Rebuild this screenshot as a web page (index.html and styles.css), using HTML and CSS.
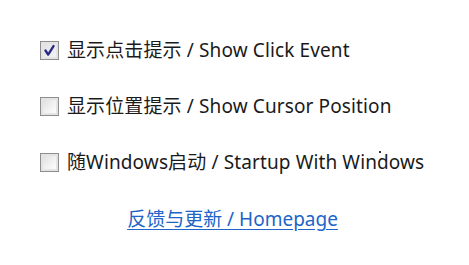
FILE: index.html
```html
<!DOCTYPE html>
<html>
<head>
<meta charset="utf-8">
<link rel="stylesheet" href="styles.css">
</head>
<body>
<div class="panel">
  <label class="row">
    <span class="box checked">
      <svg viewBox="0 0 19 19" width="19" height="19"><path d="M5 9.5 L8 14 L14 4.5" fill="none" stroke="#27288a" stroke-width="2.6" stroke-linecap="round" stroke-linejoin="round"/></svg>
    </span>
    <span class="text">显示点击提示 / Show Click Event</span>
  </label>
  <label class="row">
    <span class="box"></span>
    <span class="text">显示位置提示 / Show Cursor Position</span>
  </label>
  <label class="row">
    <span class="box"></span>
    <span class="text">随Windows启动 / Startup With Windows</span>
  </label>
  <div class="linkrow"><a class="link" href="#">反馈与更新 / Homepage</a></div>
</div>
<span class="dot"></span>
</body>
</html>
```
FILE: styles.css
```css
html, body {
  margin: 0;
  padding: 0;
  background: #ffffff;
  width: 469px;
  height: 265px;
  overflow: hidden;
  position: relative;
}
.panel {
  display: flex;
  flex-direction: column;
  padding: 22px 0 0 40px;
  font-family: "Noto Sans", "Noto Sans CJK SC", sans-serif;
  font-size: 19px;
  color: #1a1a1a;
}
.row {
  display: flex;
  align-items: center;
  gap: 8px;
  height: 56px;
}
.box {
  box-sizing: border-box;
  width: 19px;
  height: 19px;
  border: 1px solid #8e8e8e;
  background: linear-gradient(135deg, #dcdcdc 0%, #f3f3f3 60%, #ffffff 100%);
  box-shadow: inset 0 0 0 2px #e4e4e4;
  display: flex;
  align-items: center;
  justify-content: center;
}
.box svg { display: block; }
.box.checked {
  background: linear-gradient(135deg, #e0e0e0 0%, #f5f5f5 100%);
}
.text { line-height: 24px; letter-spacing: 0.12px; }
.linkrow {
  display: flex;
  justify-content: center;
  height: 56px;
  align-items: center;
  margin-left: -44px;
}
.link {
  color: #2064c8;
  text-decoration: underline;
  text-underline-offset: 3px;
}
.dot {
  position: absolute;
  left: 379px;
  top: 151px;
  width: 2px;
  height: 2px;
  background: #333;
}
```
